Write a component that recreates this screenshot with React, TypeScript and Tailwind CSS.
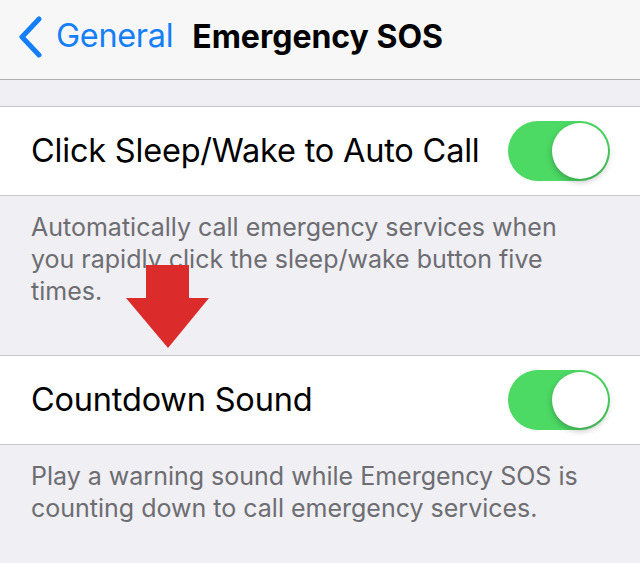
const Toggle = () => (
  <div className="relative w-[102px] h-[60px] rounded-full bg-[#4cd964] shrink-0">
    <div className="absolute right-[2px] top-[2px] w-[56px] h-[56px] rounded-full bg-white shadow-[0_3px_6px_rgba(0,0,0,0.25)]" />
  </div>
);

const Row = ({ label }: { label: string }) => (
  <div className="flex items-center justify-between bg-white border-y border-[#c8c7cc] h-[90px] pl-[31px] pr-[30px]">
    <span className="text-[32.5px] text-black tracking-[-0.2px]">{label}</span>
    <Toggle />
  </div>
);

const Footer = ({ children }: { children: React.ReactNode }) => (
  <div className="h-[159px] pl-[31px] pr-[60px] pt-[15px]">
    <p className="text-[25px] leading-[32px] text-[#6d6d72]">{children}</p>
  </div>
);

export default function App() {
  return (
    <div className="relative w-[640px] h-[563px] overflow-hidden bg-[#efeff4] font-['Inter',sans-serif]">
      <header className="flex items-center h-[80px] bg-[#f7f7f8] border-b border-[#b2b2b2] pl-[17px]">
        <svg width="26" height="42" viewBox="0 0 26 42" className="mb-[6px]">
          <path d="M22 3 L5 21 L22 39" fill="none" stroke="#147efb" strokeWidth="5" strokeLinecap="round" strokeLinejoin="round" />
        </svg>
        <span className="ml-[13px] mb-[6px] text-[32.4px] text-[#147efb] tracking-[-0.3px]">General</span>
        <span className="ml-[19px] mb-[6px] text-[32px] font-bold text-black tracking-[0px]">Emergency SOS</span>
      </header>
      <div className="h-[26px]" />
      <Row label="Click Sleep/Wake to Auto Call" />
      <Footer>
        Automatically call emergency services when you rapidly click the sleep/wake button five times.
      </Footer>
      <Row label="Countdown Sound" />
      <Footer>Play a warning sound while Emergency SOS is counting down to call emergency services.</Footer>
      <svg className="absolute left-[126px] top-[265px]" width="84" height="84" viewBox="0 0 84 84">
        <polygon points="20,0 63,0 63,33 83,33 42,83 0,33 20,33" fill="#dc2b2b" />
      </svg>
    </div>
  );
}
